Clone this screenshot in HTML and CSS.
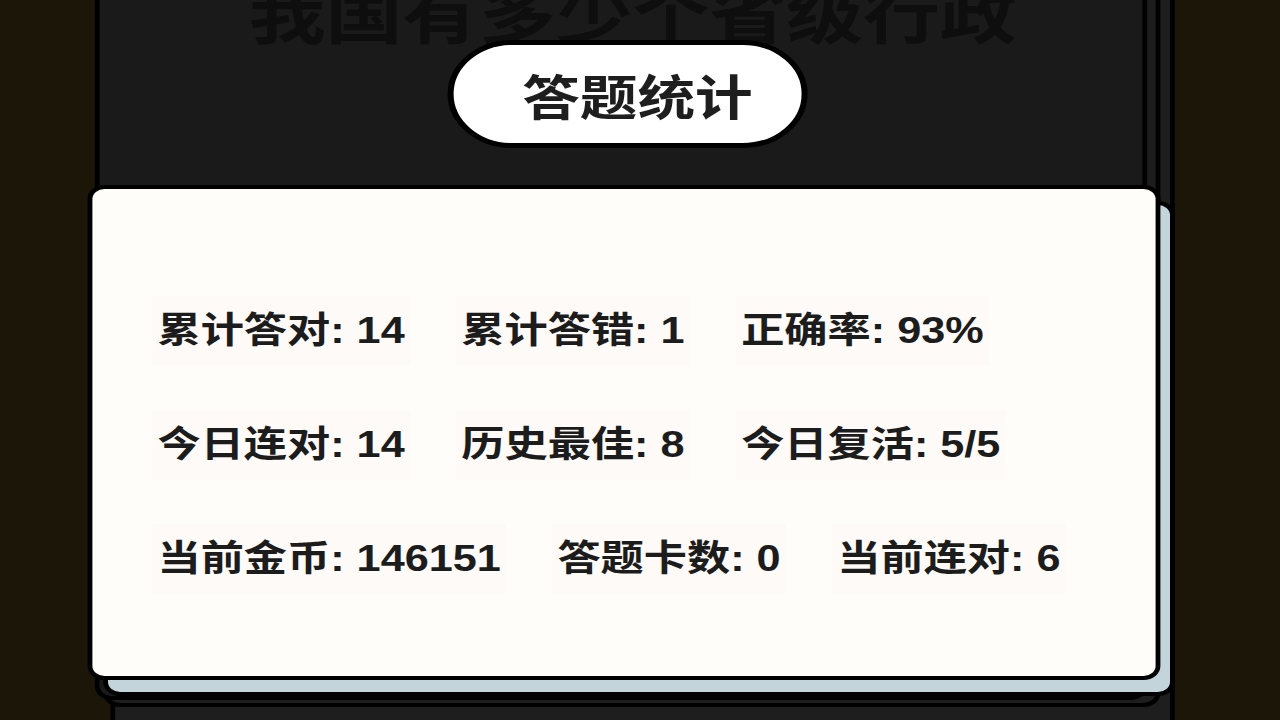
FILE: index.html
```html
<!DOCTYPE html>
<html lang="zh-CN">
<head>
<meta charset="utf-8">
<title>答题统计</title>
<link rel="stylesheet" href="styles.css">
</head>
<body>
<div class="stage">
  <div class="layer layer-c"></div>
  <div class="layer layer-b"></div>
  <div class="layer layer-a">
    <div class="question">我国有多少个省级行政</div>
    <div class="pill"><span class="pill-text">答题统计</span></div>
  </div>
  <div class="card-back"></div>
  <div class="card">
    <div class="stats">
      <div class="row">
        <span class="item">累计答对: 14</span>
        <span class="item">累计答错: 1</span>
        <span class="item">正确率: 93%</span>
      </div>
      <div class="row">
        <span class="item">今日连对: 14</span>
        <span class="item">历史最佳: 8</span>
        <span class="item">今日复活: 5/5</span>
      </div>
      <div class="row">
        <span class="item">当前金币: 146151</span>
        <span class="item">答题卡数: 0</span>
        <span class="item">当前连对: 6</span>
      </div>
    </div>
  </div>
</div>
</body>
</html>
```

FILE: styles.css
```css
html, body {
  margin: 0;
  padding: 0;
  width: 1280px;
  height: 720px;
  overflow: hidden;
  background: #1b1608;
}

.stage {
  position: relative;
  width: 1066.67px;
  height: 720px;
  transform: scaleX(1.2);
  transform-origin: 0 0;
}

.layer {
  position: absolute;
  box-sizing: border-box;
  border: 4px solid #000;
  border-radius: 14px;
}

.layer-c {
  left: 92px;
  top: -40px;
  width: 887px;
  height: 790px;
  background: #1e1e1e;
}

.layer-b {
  left: 86px;
  top: -40px;
  width: 880.7px;
  height: 747px;
  background: #1d1d1d;
}

.layer-a {
  left: 79.2px;
  top: -40px;
  width: 876.6px;
  height: 740px;
  background: #1a1a1a;
  display: flex;
  flex-direction: column;
  align-items: flex-start;
}

.question {
  margin-left: 124px;
  margin-top: 14px;
  height: 60px;
  line-height: 64px;
  font-family: "Noto Sans CJK SC", sans-serif;
  font-weight: 700;
  font-size: 64px;
  color: #0e0e0e;
  white-space: nowrap;
}

.pill {
  margin-left: 290px;
  margin-top: 2px;
  box-sizing: border-box;
  width: 300px;
  height: 108px;
  border: 5px solid #000;
  border-radius: 54px;
  background: #fff;
  display: flex;
  align-items: center;
  justify-content: center;
  padding-left: 16px;
}

.pill-text {
  font-family: "Noto Sans CJK SC", sans-serif;
  font-weight: 700;
  font-size: 48px;
  line-height: 1;
  color: #1e1e1e;
}

.card-back {
  position: absolute;
  left: 85.8px;
  top: 201px;
  width: 893.3px;
  height: 495px;
  box-sizing: border-box;
  border: 4px solid #000;
  border-radius: 14px;
  background: #c3d5db;
}

.card {
  position: absolute;
  left: 73.3px;
  top: 185px;
  width: 893.3px;
  height: 495px;
  box-sizing: border-box;
  border: 4px solid #000;
  border-radius: 14px;
  background: #fffdfa;
}

.stats {
  padding: 107px 0 0 49.4px;
  display: flex;
  flex-direction: column;
  gap: 44px;
}

.row {
  display: flex;
  gap: 38.2px;
}

.item {
  height: 70px;
  line-height: 70px;
  padding: 0 4.5px;
  background: #fdfaf7;
  font-family: "Liberation Sans", "Noto Sans CJK SC", sans-serif;
  font-weight: 700;
  font-size: 36px;
  color: #1c1c1c;
  white-space: nowrap;
}
```
